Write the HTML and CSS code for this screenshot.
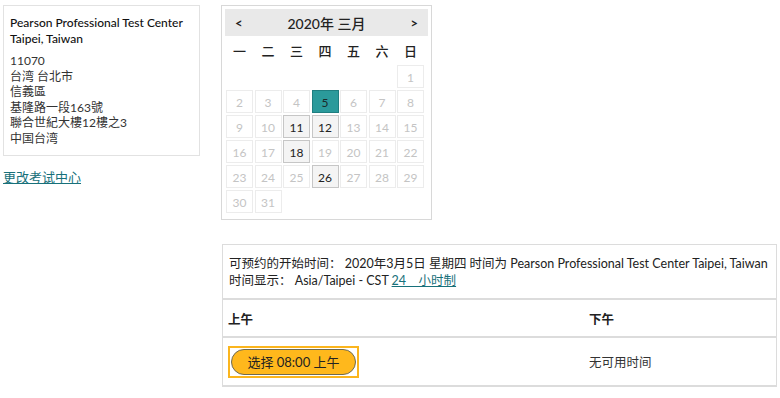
FILE: index.html
```html
<!DOCTYPE html>
<html lang="zh-CN">
<head>
  <meta charset="UTF-8">
  <meta name="viewport" content="width=device-width, initial-scale=1.0">
  <title>选择考试时间</title>
  <link rel="stylesheet" href="styles.css">
</head>
<body>
  <div class="page">
    <div class="sidebar">
      <div class="center-box">
        <div class="center-name">Pearson Professional Test Center Taipei, Taiwan</div>
        <div class="center-address">
          11070<br>
          台湾 台北市<br>
          信義區<br>
          基隆路一段163號<br>
          聯合世紀大樓12樓之3<br>
          中国台湾
        </div>
      </div>
      <a class="change-link" href="#">更改考试中心</a>
    </div>

    <div class="main">
      <div class="calendar">
        <div class="cal-head">
          <span class="cal-nav">&lt;</span>
          <span class="cal-title">2020年 三月</span>
          <span class="cal-nav">&gt;</span>
        </div>
        <div class="cal-weekdays">
          <span>一</span><span>二</span><span>三</span><span>四</span><span>五</span><span>六</span><span>日</span>
        </div>
        <div class="cal-grid" id="calGrid"></div>
      </div>

      <div class="slots">
        <div class="slots-info">
          <div>可预约的开始时间： 2020年3月5日 星期四 时间为 Pearson Professional Test Center Taipei, Taiwan</div>
          <div>时间显示： Asia/Taipei - CST <a class="link" href="#">24　小时制</a></div>
        </div>
        <div class="slots-row slots-head">
          <div class="col-am">上午</div>
          <div class="col-pm">下午</div>
        </div>
        <div class="slots-row slots-body">
          <div class="col-am">
            <span class="focus-ring"><button class="slot-btn">选择 08:00 上午</button></span>
          </div>
          <div class="col-pm">无可用时间</div>
        </div>
      </div>
    </div>
  </div>

  <script>
    const grid = document.getElementById('calGrid');
    const available = [11, 12, 18, 26];
    const selected = 5;
    // March 2020 starts on a Sunday, so six blank cells first
    for (let i = 0; i < 6; i++) {
      const blank = document.createElement('span');
      blank.className = 'day blank';
      grid.appendChild(blank);
    }
    for (let d = 1; d <= 31; d++) {
      const cell = document.createElement('span');
      cell.className = 'day';
      if (d === selected) cell.classList.add('selected');
      else if (available.includes(d)) cell.classList.add('open');
      cell.textContent = d;
      grid.appendChild(cell);
    }
  </script>
</body>
</html>
```

FILE: styles.css
```css
body {
  margin: 0;
  font-family: Lato, "Noto Sans CJK SC", sans-serif;
  color: #333;
  background: #fff;
}

.page {
  display: flex;
  padding: 5px 3px;
}

.sidebar {
  width: 197px;
  flex-shrink: 0;
}

.center-box {
  border: 1px solid #e2e2e2;
  padding: 9px 6px 9px;
  font-size: 12px;
  line-height: 15.5px;
}

.center-name {
  font-weight: 500;
  color: #111;
  margin-bottom: 7px;
}

.change-link {
  display: inline-block;
  margin-top: 11px;
  font-size: 13px;
  color: #17707a;
}

.main {
  margin-left: 21px;
  flex: 1;
}

.calendar {
  width: 203px;
  border: 1px solid #d8d8d8;
  padding: 3px 3px 6px;
}

.cal-head {
  display: flex;
  align-items: center;
  justify-content: space-between;
  height: 27px;
  padding: 0 10px 0 10px;
  background: #e9e9e9;
  color: #222;
}

.cal-title {
  font-size: 14px;
  font-weight: 500;
}

.cal-nav {
  font-size: 13px;
  font-weight: 700;
}

.cal-weekdays,
.cal-grid {
  display: grid;
  grid-template-columns: repeat(7, 27px);
  column-gap: 1.5px;
  padding-left: 1px;
}

.cal-weekdays {
  height: 29px;
  align-items: center;
  font-size: 13px;
  font-weight: 500;
  color: #222;
  text-align: center;
}

.cal-grid {
  row-gap: 2px;
}

.day {
  height: 23px;
  line-height: 23px;
  text-align: center;
  font-size: 12px;
  color: #c4c4c4;
  border: 1px solid #ececec;
  box-sizing: border-box;
}

.day.blank {
  border-color: transparent;
}

.day.open {
  background: #f4f4f4;
  border-color: #c6c6c6;
  color: #222;
}

.day.selected {
  background: #2b9a9b;
  border-color: #1f7e80;
  color: #1c2b2b;
}

.slots {
  margin-top: 24px;
  margin-left: 1px;
  width: 553px;
  border: 1px solid #dcdcdc;
  border-bottom-width: 2px;
  font-size: 12.5px;
}

.slots-info {
  padding: 10px 6px 9px;
  line-height: 17px;
  color: #222;
  white-space: nowrap;
  border-bottom: 2px solid #dcdcdc;
}

.link {
  color: #17707a;
}

.slots-row {
  display: flex;
  align-items: center;
}

.slots-head {
  height: 36px;
  font-weight: 700;
  color: #222;
  border-bottom: 2px solid #dcdcdc;
}

.slots-body {
  height: 47px;
}

.col-am {
  width: 361px;
  padding-left: 5px;
}

.col-pm {
  flex: 1;
}

.focus-ring {
  display: inline-flex;
  padding: 1px;
  border: 2px solid #fbb51d;
}

.slot-btn {
  width: 125px;
  height: 26px;
  font-family: Lato, "Noto Sans CJK SC", sans-serif;
  font-size: 13px;
  color: #222;
  background: #ffb81c;
  border: 1px solid #6e6a52;
  border-radius: 14px;
  cursor: pointer;
}
```
